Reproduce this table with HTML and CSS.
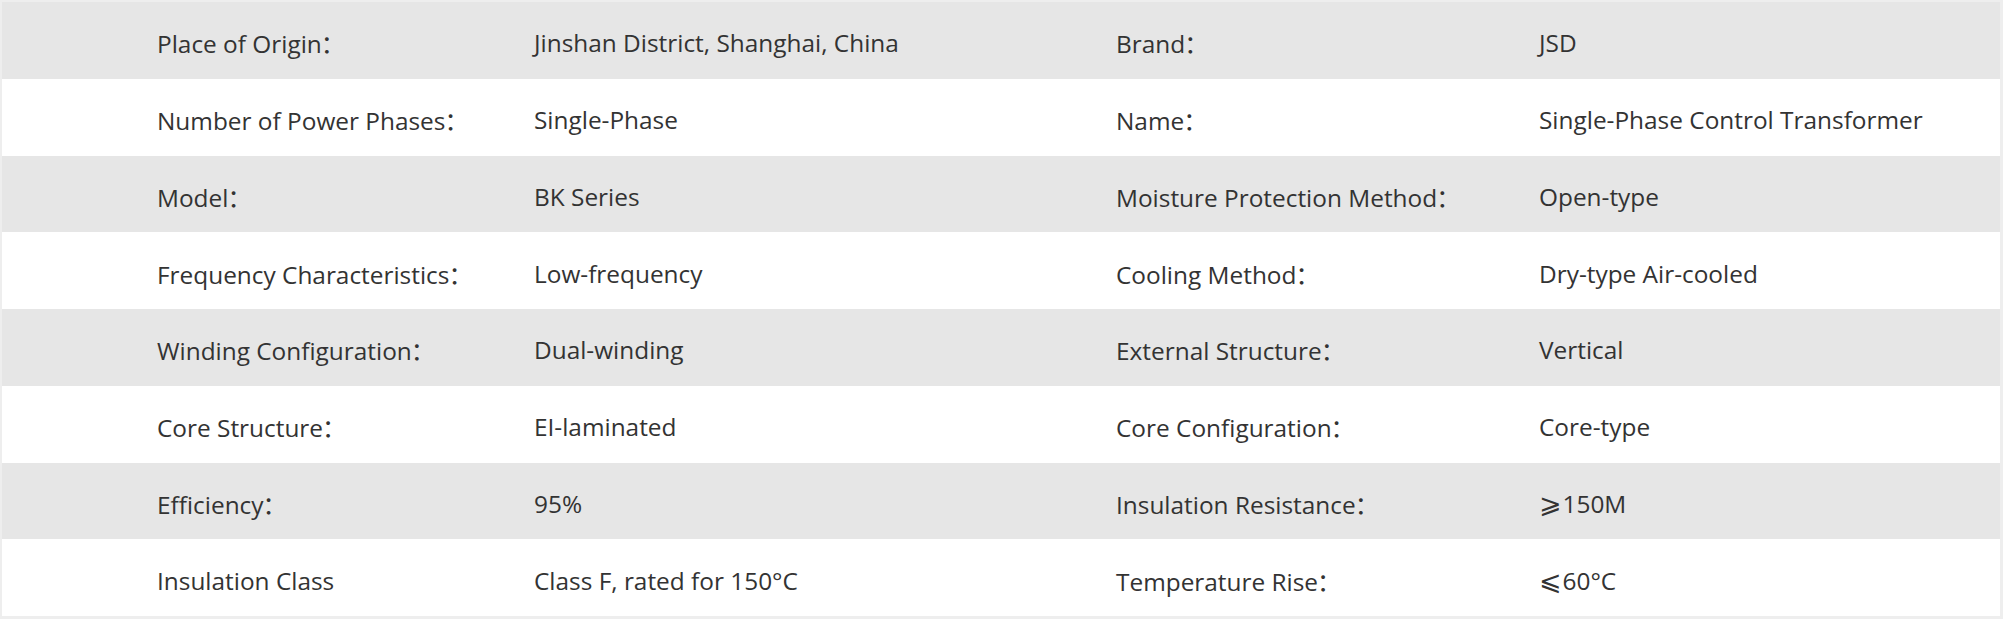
FILE: index.html
```html
<!DOCTYPE html>
<html lang="en">
<head>
<meta charset="utf-8">
<title>Specifications</title>
<link rel="stylesheet" href="styles.css">
</head>
<body>
<div class="spec">
  <div class="row">
    <div class="cell">Place of Origin<span class="colon">：</span></div>
    <div class="cell">Jinshan District, Shanghai, China</div>
    <div class="cell">Brand<span class="colon">：</span></div>
    <div class="cell">JSD</div>
  </div>
  <div class="row">
    <div class="cell">Number of Power Phases<span class="colon">：</span></div>
    <div class="cell">Single-Phase</div>
    <div class="cell">Name<span class="colon">：</span></div>
    <div class="cell">Single-Phase Control Transformer</div>
  </div>
  <div class="row">
    <div class="cell">Model<span class="colon">：</span></div>
    <div class="cell">BK Series</div>
    <div class="cell">Moisture Protection Method<span class="colon">：</span></div>
    <div class="cell">Open-type</div>
  </div>
  <div class="row">
    <div class="cell">Frequency Characteristics<span class="colon">：</span></div>
    <div class="cell">Low-frequency</div>
    <div class="cell">Cooling Method<span class="colon">：</span></div>
    <div class="cell">Dry-type Air-cooled</div>
  </div>
  <div class="row">
    <div class="cell">Winding Configuration<span class="colon">：</span></div>
    <div class="cell">Dual-winding</div>
    <div class="cell">External Structure<span class="colon">：</span></div>
    <div class="cell">Vertical</div>
  </div>
  <div class="row">
    <div class="cell">Core Structure<span class="colon">：</span></div>
    <div class="cell">EI-laminated</div>
    <div class="cell">Core Configuration<span class="colon">：</span></div>
    <div class="cell">Core-type</div>
  </div>
  <div class="row">
    <div class="cell">Efficiency<span class="colon">：</span></div>
    <div class="cell">95%</div>
    <div class="cell">Insulation Resistance<span class="colon">：</span></div>
    <div class="cell"><span class="sym">⩾</span>150M</div>
  </div>
  <div class="row">
    <div class="cell">Insulation Class</div>
    <div class="cell">Class F, rated for 150°C</div>
    <div class="cell">Temperature Rise<span class="colon">：</span></div>
    <div class="cell"><span class="sym">⩽</span>60°C</div>
  </div>
</div>
</body>
</html>
```

FILE: styles.css
```css
html, body {
  margin: 0;
  padding: 0;
  background: #ffffff;
}

.spec {
  width: 2003px;
  box-sizing: border-box;
  border: 2px solid #eeeeee;
  border-bottom-width: 3px;
  border-right-width: 3px;
  font-family: "Open Sans", "Noto Sans CJK SC", sans-serif;
  font-size: 24.4px;
  color: #333333;
}

.row {
  display: grid;
  grid-template-columns: 377px 582px 423px 1fr;
  align-items: center;
  height: 76.75px;
  padding-left: 155px;
}

.row:nth-child(odd) {
  background: #e6e6e6;
}

.cell {
  white-space: nowrap;
  padding-top: 5px;
}

.colon {
  font-family: "Noto Sans CJK SC", sans-serif;
  margin-left: -1px;
}

.sym {
  font-family: "DejaVu Sans", sans-serif;
  font-size: 1.1em;
  line-height: 1;
  margin-right: 1px;
}
```
